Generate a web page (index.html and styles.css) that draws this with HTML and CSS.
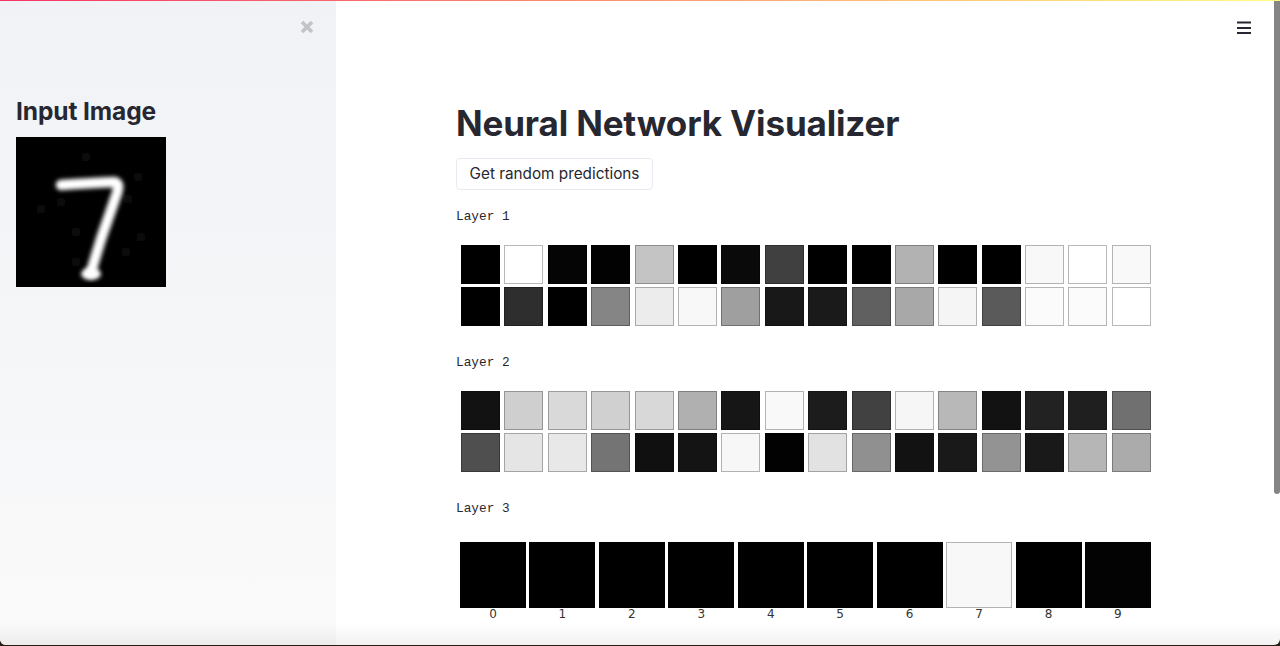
FILE: index.html
```html
<!DOCTYPE html>
<html lang="en">
<head>
    <meta charset="UTF-8">
    <meta name="viewport" content="width=device-width, initial-scale=1.0">
    <link rel="stylesheet" href="styles.css">
    <title>Neural Network Visualizer</title>
</head>

<body>
<div class="window">
    <div class="topline"></div>

    <div class="app">
        <aside class="sidebar">
            <button class="close" aria-label="Close sidebar">
                <svg width="14" height="14" viewBox="0 0 14 14"><path d="M2 2 L12 12 M12 2 L2 12" stroke="#c2c3c7" stroke-width="3.6" fill="none"/></svg>
            </button>
            <h2>Input Image</h2>
            <svg class="digit" width="150" height="150" viewBox="0 0 150 150">
                <defs>
                    <filter id="soft" x="-20%" y="-20%" width="140%" height="140%"><feGaussianBlur stdDeviation="2.2"/></filter>
                    <filter id="softer" x="-20%" y="-20%" width="140%" height="140%"><feGaussianBlur stdDeviation="3"/></filter>
                </defs>
                <rect width="150" height="150" fill="#000"/>
                <g fill="#0d0d0d" filter="url(#softer)">
                    <circle cx="45" cy="65" r="5"/><circle cx="60" cy="95" r="5"/><circle cx="112" cy="62" r="5"/>
                    <circle cx="125" cy="100" r="5"/><circle cx="70" cy="20" r="5"/><circle cx="122" cy="40" r="5"/>
                    <circle cx="110" cy="115" r="5"/><circle cx="60" cy="125" r="5"/><circle cx="25" cy="72" r="5"/>
                </g>
                <path d="M45 48 Q75 46 99 45 Q104 47 101 56 L85 102 L75 135" stroke="#fff" stroke-width="10.5" stroke-linejoin="round" stroke-linecap="round" fill="none" filter="url(#soft)"/>
                <ellipse cx="75" cy="137" rx="10" ry="6" fill="#fff" filter="url(#soft)"/>
            </svg>
        </aside>

        <main class="content">
            <h1>Neural Network Visualizer</h1>
            <button class="btn">Get random predictions</button>

            <pre class="layer-name">Layer 1</pre>
            <div class="plot">
                <i style="background:#000"></i><i style="background:#fff"></i><i style="background:#050505"></i><i style="background:#020202"></i><i style="background:#c4c4c4"></i><i style="background:#000"></i><i style="background:#0a0a0a"></i><i style="background:#404040"></i><i style="background:#000"></i><i style="background:#000"></i><i style="background:#b2b2b2"></i><i style="background:#000"></i><i style="background:#000"></i><i style="background:#f8f8f8"></i><i style="background:#fff"></i><i style="background:#f9f9f9"></i>
                <i style="background:#000"></i><i style="background:#2e2e2e"></i><i style="background:#000"></i><i style="background:#858585"></i><i style="background:#ececec"></i><i style="background:#f8f8f8"></i><i style="background:#9f9f9f"></i><i style="background:#181818"></i><i style="background:#1a1a1a"></i><i style="background:#606060"></i><i style="background:#a8a8a8"></i><i style="background:#f5f5f5"></i><i style="background:#5a5a5a"></i><i style="background:#fbfbfb"></i><i style="background:#fbfbfb"></i><i style="background:#fff"></i>
            </div>

            <pre class="layer-name">Layer 2</pre>
            <div class="plot">
                <i style="background:#121212"></i><i style="background:#cfcfcf"></i><i style="background:#d9d9d9"></i><i style="background:#d0d0d0"></i><i style="background:#d8d8d8"></i><i style="background:#b0b0b0"></i><i style="background:#161616"></i><i style="background:#f9f9f9"></i><i style="background:#1c1c1c"></i><i style="background:#414141"></i><i style="background:#f6f6f6"></i><i style="background:#b8b8b8"></i><i style="background:#121212"></i><i style="background:#222"></i><i style="background:#1f1f1f"></i><i style="background:#707070"></i>
                <i style="background:#4f4f4f"></i><i style="background:#e5e5e5"></i><i style="background:#e8e8e8"></i><i style="background:#747474"></i><i style="background:#101010"></i><i style="background:#141414"></i><i style="background:#f7f7f7"></i><i style="background:#020202"></i><i style="background:#e2e2e2"></i><i style="background:#909090"></i><i style="background:#121212"></i><i style="background:#191919"></i><i style="background:#939393"></i><i style="background:#191919"></i><i style="background:#b6b6b6"></i><i style="background:#ababab"></i>
            </div>

            <pre class="layer-name">Layer 3</pre>
            <div class="output">
                <div class="out"><i style="background:#000"></i><span>0</span></div>
                <div class="out"><i style="background:#000"></i><span>1</span></div>
                <div class="out"><i style="background:#000"></i><span>2</span></div>
                <div class="out"><i style="background:#000"></i><span>3</span></div>
                <div class="out"><i style="background:#000"></i><span>4</span></div>
                <div class="out"><i style="background:#000"></i><span>5</span></div>
                <div class="out"><i style="background:#000"></i><span>6</span></div>
                <div class="out"><i style="background:#f8f8f8"></i><span>7</span></div>
                <div class="out"><i style="background:#000"></i><span>8</span></div>
                <div class="out"><i style="background:#030303"></i><span>9</span></div>
            </div>
        </main>
    </div>

    <button class="menu" aria-label="Menu">
        <svg width="14" height="14" viewBox="0 0 14 14"><path d="M0 1.5 H14 M0 6.9 H14 M0 12 H14" stroke="#262730" stroke-width="2" fill="none"/></svg>
    </button>
    <div class="thumb"></div>
    <div class="edge"></div>
</div>
</body>
</html>
```
FILE: styles.css
```css
* {
    box-sizing: border-box;
}

html, body {
    margin: 0;
    height: 646px;
    overflow: hidden;
}

body {
    background: #2b1d12;
    color: #262730;
    font-family: "Inter", "Noto Sans", sans-serif;
}

.window {
    position: relative;
    height: 645px;
    background: #fff;
    border-radius: 0 0 6px 6px;
    overflow: hidden;
}

.topline {
    height: 1px;
    background: linear-gradient(90deg, #f63366, #fffd80);
}

.app {
    display: flex;
    height: 644px;
}

/* sidebar */
.sidebar {
    position: relative;
    width: 336px;
    flex: none;
    padding: 95px 16px 0;
    background: linear-gradient(180deg, #f0f2f6, #fafafa);
}

.sidebar h2 {
    margin: 0 0 10px;
    font-size: 24.5px;
    line-height: 31px;
    font-weight: 700;
    letter-spacing: -.1px;
}

.digit {
    display: block;
}

.close {
    position: absolute;
    top: 19px;
    right: 22px;
    padding: 0;
    border: 0;
    background: none;
    line-height: 0;
}

/* main column */
.content {
    flex: 1;
    padding: 98px 0 0 120px;
}

h1 {
    margin: 0 0 10px;
    font-size: 35px;
    line-height: 49px;
    font-weight: 700;
    letter-spacing: -.15px;
}

.btn {
    display: block;
    width: 197px;
    height: 32px;
    padding: 0 0 1px;
    background: #fff;
    border: 1px solid #e6eaf1;
    border-radius: 4px;
    color: #262730;
    font: 400 15.3px "Inter", "Noto Sans", sans-serif;
}

.layer-name {
    margin: 19px 0 0;
    height: 16px;
    font: 12.8px/16px "Liberation Mono", monospace;
}

.plot {
    display: grid;
    grid-template-columns: repeat(16, 39px);
    grid-auto-rows: 39px;
    justify-content: space-between;
    row-gap: 3px;
    width: 690px;
    margin: 20px 0 0 5px;
    padding-bottom: 10px;
}

.plot i,
.out i {
    display: block;
    border: 1px solid rgba(0, 0, 0, .28);
}

.output {
    display: flex;
    justify-content: space-between;
    width: 691px;
    margin: 25px 0 0 4px;
}

.out {
    width: 66px;
    text-align: center;
}

.out i {
    height: 66px;
}

.out span {
    display: block;
    font: 12px/13px "DejaVu Sans", sans-serif;
    color: #333;
}

/* things lying over the page */
.menu {
    position: absolute;
    top: 21px;
    right: 29px;
    padding: 0;
    border: 0;
    background: none;
    line-height: 0;
}

.thumb {
    position: absolute;
    top: 1px;
    right: 0;
    width: 6px;
    height: 493px;
    background: #858585;
    border-radius: 0 0 3px 3px;
}

.edge {
    position: absolute;
    left: 0;
    right: 0;
    bottom: 0;
    height: 22px;
    background: linear-gradient(180deg, rgba(0, 0, 0, 0), rgba(0, 0, 0, .055));
    pointer-events: none;
}
```
